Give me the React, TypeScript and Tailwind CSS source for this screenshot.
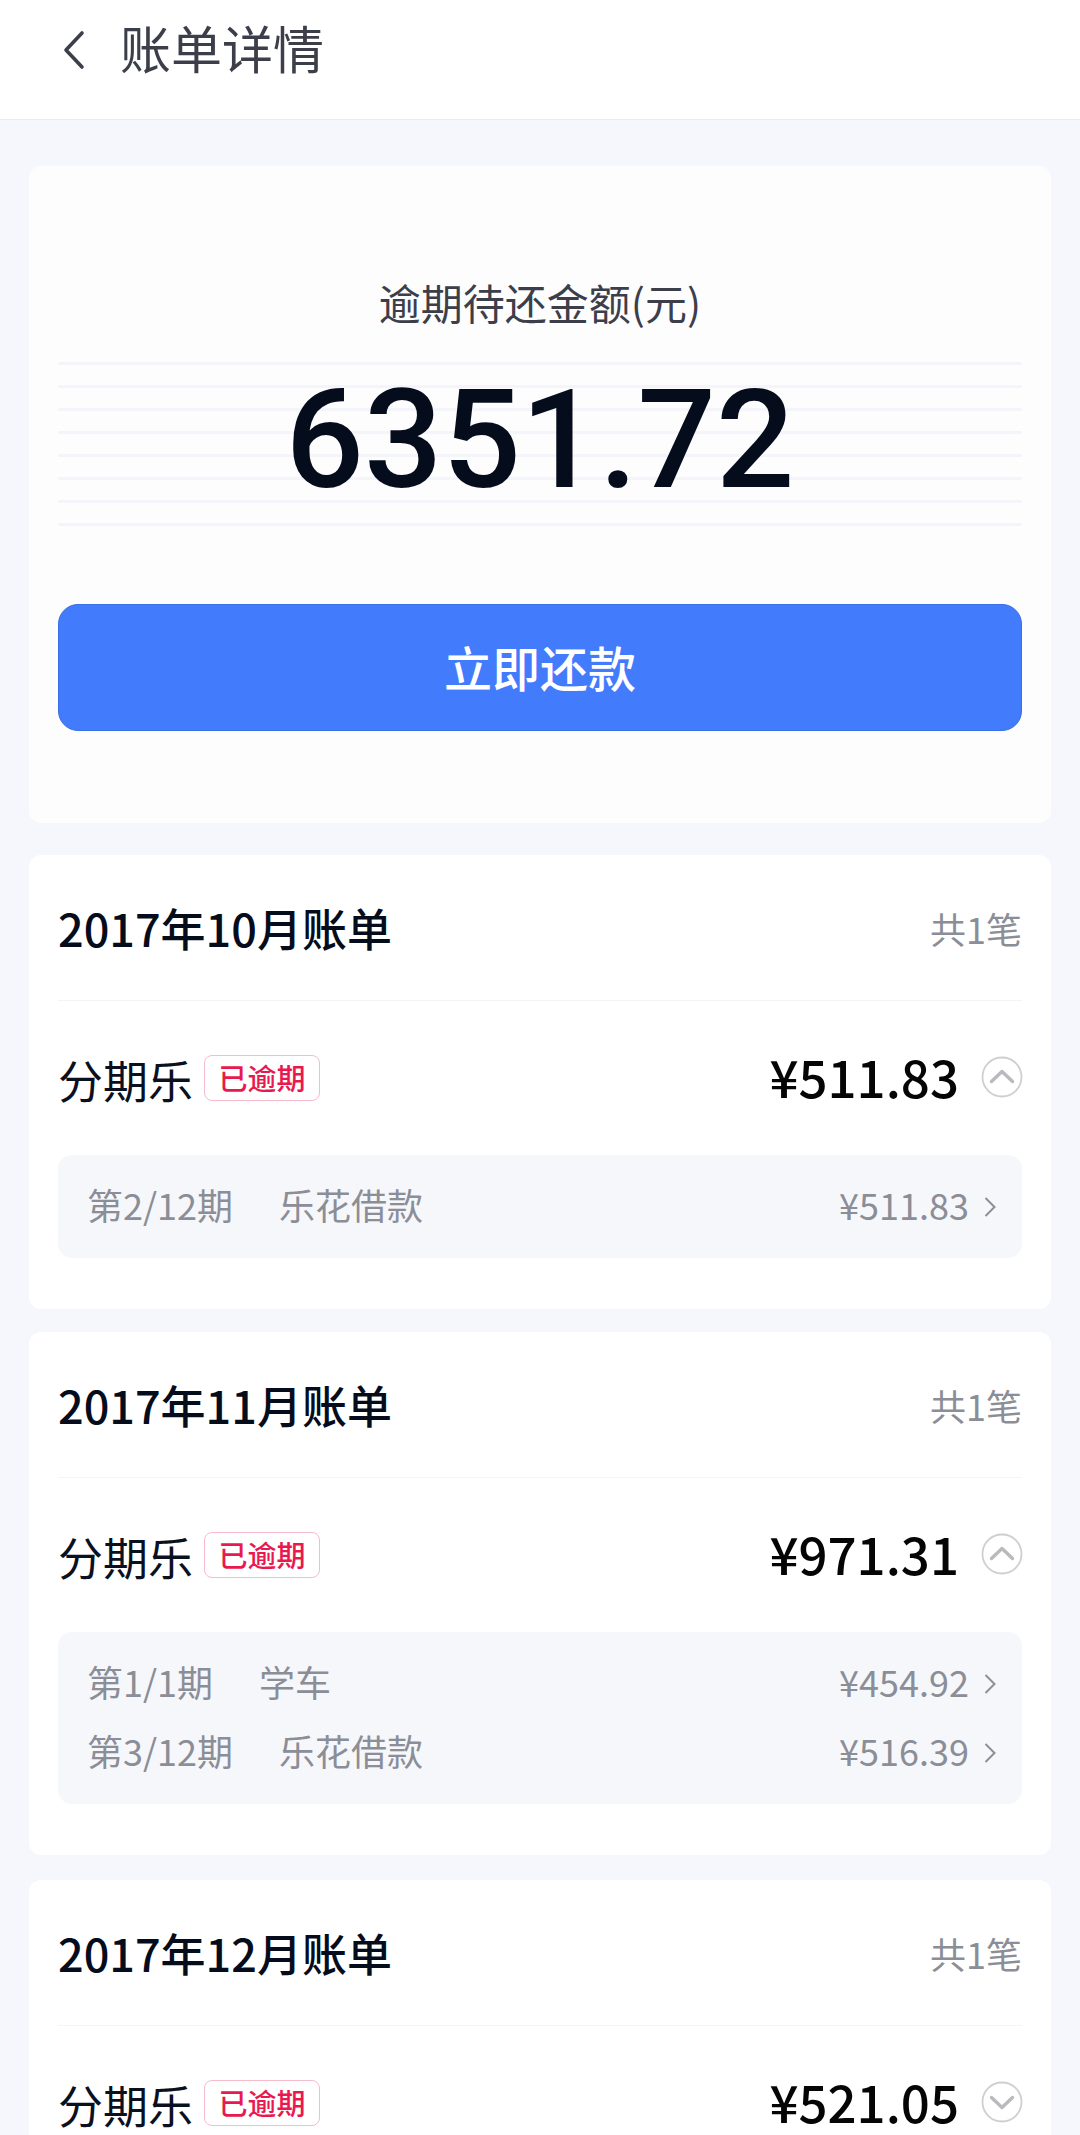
const cjk = "font-['Noto_Sans_CJK_SC','Noto_Sans',sans-serif]"

interface Item {
  period: string
  name:   string
  amount: string
}

interface Bill {
  title:  string
  amount: string
  open:   boolean
  items:  Item[]
  mt:     string
}

const bills: Bill[] = [
  { title: '2017年10月账单', amount: '¥511.83', open: true, mt: 'mt-[32px]', items: [
    { period: '第2/12期', name: '乐花借款', amount: '¥511.83' },
  ] },
  { title: '2017年11月账单', amount: '¥971.31', open: true, mt: 'mt-[23px]', items: [
    { period: '第1/1期', name: '学车', amount: '¥454.92' },
    { period: '第3/12期', name: '乐花借款', amount: '¥516.39' },
  ] },
  { title: '2017年12月账单', amount: '¥521.05', open: false, mt: 'mt-[25px]', items: [] },
]

const lines = [0, 1, 2, 3, 4, 5, 6, 7]

function RoundToggle({ open }: { open: boolean }) {
  return (
    <svg width="42" height="42" viewBox="0 0 42 42" fill="none" className="ml-[22px] mr-[-1px] shrink-0">
      <circle cx="21" cy="21" r="19.5" stroke="#cfcfd1" strokeWidth="1.8" />
      <path
        d={open ? 'M10.5 25.5 L21 15.5 L31.5 25.5' : 'M10.5 16.5 L21 26.5 L31.5 16.5'}
        stroke="#b9babd"
        strokeWidth="3.4"
        strokeLinecap="round"
        strokeLinejoin="round"
      />
    </svg>
  )
}

function SmallChevron() {
  return (
    <svg width="12" height="22" viewBox="0 0 12 22" fill="none" className="ml-[15px] mr-[26px] shrink-0">
      <path d="M1.5 2 L10.5 11 L1.5 20" stroke="#8c8f98" strokeWidth="2" />
    </svg>
  )
}

function BillCard({ bill }: { bill: Bill }) {
  return (
    <section className={`bg-white rounded-[12px] px-[29px] pb-[51px] ${bill.mt}`}>
      <div className="h-[146px] flex items-center justify-between border-b border-[#f3f4f7]">
        <span className="text-[45px] font-medium text-[#050c1c] leading-none">{bill.title}</span>
        <span className="text-[36px] text-[#8b8e97] leading-none">共1笔</span>
      </div>
      <div className="h-[154px] flex items-center justify-between pb-[3px]">
        <div className="flex items-center pt-[6px]">
          <span className="text-[45px] text-[#0a1020] leading-none">分期乐</span>
          <span className="ml-[11px] h-[46px] w-[116px] mt-[-4px] flex items-center justify-center rounded-[8px] border border-[#f6bccb] text-[29px] leading-none font-medium text-[#e9194f]">
            已逾期
          </span>
        </div>
        <div className="flex items-center">
          <span className="text-[51px] font-medium text-[#050505] leading-none">{bill.amount}</span>
          <RoundToggle open={bill.open} />
        </div>
      </div>
      {bill.items.length > 0 && (
        <div className="bg-[#f6f7fb] rounded-[14px] py-[17px]">
          {bill.items.map((item) => (
            <div key={item.period} className="h-[69px] flex items-center justify-between pl-[29px] text-[#8b8e97] text-[36px] leading-none">
              <div className="flex pb-[5px]">
                <span>{item.period}</span>
                <span className="ml-[46px]">{item.name}</span>
              </div>
              <div className="flex items-center">
                <span className="pb-[5px]">{item.amount}</span>
                <SmallChevron />
              </div>
            </div>
          ))}
        </div>
      )}
    </section>
  )
}

export default function App() {
  return (
    <div className={`h-[2135px] w-[1080px] overflow-hidden bg-[#f5f7fc] ${cjk}`}>
      {/* Top bar */}
      <header className="h-[120px] bg-white border-b border-[#ebecef] flex items-center pb-[20px]">
        <svg width="24" height="40" viewBox="0 0 24 40" fill="none" className="ml-[62px] shrink-0">
          <path d="M20 3 L4 20 L20 37" stroke="#3c3f4a" strokeWidth="3.6" strokeLinecap="round" strokeLinejoin="round" />
        </svg>
        <span className="ml-[34px] text-[51px] text-[#3c3f4a] leading-none pb-[4px]">账单详情</span>
      </header>

      <main className="px-[29px] pt-[46px]">
        {/* Overdue summary */}
        <section className="bg-[#fdfdfe] rounded-[12px] h-[657px] px-[29px] pt-[115px]">
          <div className="text-center text-[42px] text-[#3c3f4a] leading-none h-[81px]">逾期待还金额(元)</div>
          <div className="relative flex flex-col gap-[20px]">
            {lines.map((n) => (
              <div key={n} className="h-[3px] bg-[#f3f5fa]" />
            ))}
            <div className="absolute inset-x-0 top-0 h-[156px] flex items-center justify-center font-['Roboto',sans-serif] font-medium text-[138px] leading-none text-[#050c1c]">
              6351.72
            </div>
          </div>
          <button
            type="button"
            className="mt-[78px] w-full h-[127px] rounded-[20px] bg-[#437bfd] border border-[#3b6fe6] flex items-center justify-center text-white text-[48px] font-medium leading-none pb-[4px]"
          >
            立即还款
          </button>
        </section>

        {bills.map((bill) => (
          <BillCard key={bill.title} bill={bill} />
        ))}
      </main>
    </div>
  )
}
